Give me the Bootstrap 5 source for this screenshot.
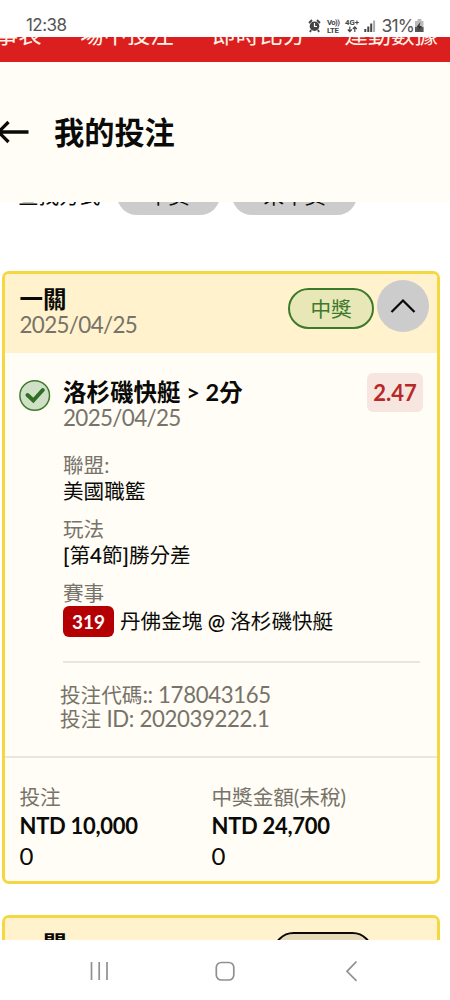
<!DOCTYPE html>
<html lang="zh-Hant">
<head>
<meta charset="utf-8">
<meta name="viewport" content="width=device-width, initial-scale=1">
<title>我的投注</title>
<link href="https://cdn.jsdelivr.net/npm/bootstrap@5.3.0/dist/css/bootstrap.min.css" rel="stylesheet">
<style>
body{font-family:Lato,"Noto Sans CJK TC",sans-serif;background:#fff;color:#0a0a08;height:1000px;overflow:hidden;font-size:20.6px;line-height:26px}
.status{height:37px;padding:14px 25px 0 26px;font-family:Inter,sans-serif;font-size:17px;line-height:23px;color:#555}
.status svg{margin-top:2px}
.status .clock{letter-spacing:-.55px}
.status .pct{letter-spacing:-.9px;font-size:17.5px}
.tabs-strip{height:25px;background:#db1f1f;color:#fff3e8;font-size:23.4px;line-height:34px;gap:38.6px;padding-right:12px}
.tabs-strip span{margin-top:-20px}
.head-bar{height:140px;background:#fffdf5}
.head-bar h1{font-size:30.2px;line-height:40px;font-weight:700;color:#0a0a08}
.filter{height:69px;padding-left:18px}
.filter .lbl{width:99px;margin-top:-19px}
.chip{height:40px;border-radius:20px;background:#ccc;margin-top:-27px;line-height:42px;text-align:center}
.bet{margin:0 10px 0 2px;border:3px solid #f5d742;border-radius:7px;background:#fffdf5;overflow:hidden}
.bet-head{height:79px;background:#fff2cc;padding:0 8px 0 14.5px}
.strong-t{font-size:23.5px;font-weight:700;line-height:26px;white-space:nowrap}
.date{font-size:22.4px;letter-spacing:-.65px;color:#77736a;line-height:26px}
.result{width:86px;height:41px;border:2px solid #3c7a2b;border-radius:21px;background:#e8e7b8;color:#3c7a2b;line-height:39px;text-align:center;margin-top:14px}
.fold{width:52px;height:52px;border-radius:50%;background:#ccc;margin:6px 0 0 3px}
.pick{padding:20px 14px 0 14px;height:405px;border-bottom:2px solid #e9e5e0}
.odds{width:56px;height:39px;border-radius:6px;background:#f7e5e0;color:#b52a27;font-weight:700;font-size:22px;line-height:40px;text-align:center}
.muted{color:#77736a}
.details{margin:20.5px 3px 0 44px;padding-bottom:24px;border-bottom:2px solid #e9e5e0}
.details b{font-weight:600}
.num{width:51px;height:31px;border-radius:6px;background:#b50003;color:#fff;font-weight:700;font-size:19px;line-height:32px;text-align:center;margin-right:6px}
.codes{margin:20px 0 0 41px;font-size:20.6px;line-height:24px}
.codes b{font-weight:400;font-size:22.2px;letter-spacing:-.35px}
.totals{height:123px;padding:26px 0 0 14.5px}
.totals .money{font-size:22px;letter-spacing:-.3px;font-weight:700;line-height:30px;margin-top:1px}
.totals .zero{font-size:24px;line-height:30px}
.totals>div{width:192px}
.second{height:25px;border-bottom:0;border-radius:7px 7px 0 0;margin-top:31px}
.second .result{border-color:#0a0a08;background:#e6dab8;width:100px;margin:14px 56px 0 0}
.sysnav{height:60px;background:#fff}
</style>
</head>
<body class="d-flex flex-column">
<div class="status d-flex flex-shrink-0">
  <span class="clock">12:38</span>
  <div class="ms-auto d-flex">
    <svg width="75" height="20" viewBox="306 16 75 20" fill="#444">
      <circle cx="313.5" cy="26.2" r="4.8"/><path d="M308 23l3-3M319 23l-3-3M310 30l-1 2M317 30l1 2" stroke="#444" stroke-width="1.8"/><path d="M313.5 23v3.5h2.5" stroke="#fff" stroke-width="1.2" fill="none"/>
      <g font-family="Roboto" font-weight="700" font-size="7.8"><text x="326" y="25.2" textLength="13">Vo))</text><text x="326" y="32.6" textLength="12">LTE</text><text x="344" y="25.2" textLength="14">4G+</text></g>
      <path d="M348.8 26.5v5m-2-2l2 2.2 2-2.2M353.8 32v-5m-2 2l2-2.2 2 2.2" stroke="#444" fill="none" stroke-width="1.2"/>
      <path d="M363.3 29h2v3h-2zM366.3 26.5h2v5.5h-2zM369.2 23.5h2v8.5h-2z"/><path d="M372.1 20.5h2v11.5h-2z" fill="#aaa"/>
    </svg>
    <span class="pct">31%</span>
    <svg width="11" height="20" viewBox="414 16 11 20"><path d="M417.5 19h4v2h2v11h-8.500v-11h2.500z" fill="#bbb"/><path d="M415 27h8.500v5H415z" fill="#555"/><path d="M420.500 22l-4 5h2.500l-1 4 4-5h-2.500z" fill="#333"/></svg>
  </div>
</div>
<nav class="tabs-strip d-flex justify-content-end flex-shrink-0 overflow-hidden text-nowrap">
  <span>賽事表</span><span>場中投注</span><span>即時比分</span><span>運動數據</span>
</nav>
<header class="head-bar d-flex align-items-center flex-shrink-0">
  <svg width="54" height="30" viewBox="0 0 54 30" fill="none" stroke="#0a0a08" stroke-width="3.3"><path d="M28.5 15H-1M8.500 5L-1.500 15l10 10"/></svg>
  <h1 class="m-0">我的投注</h1>
</header>
<div class="filter d-flex flex-shrink-0 overflow-hidden">
  <span class="lbl">查找方式</span>
  <span class="chip" style="width:103px">中獎</span>
  <span class="chip" style="width:125px;margin-left:12px">未中獎</span>
</div>
<main class="flex-shrink-0">
  <section class="bet">
    <div class="bet-head d-flex">
      <div class="me-auto" style="padding-top:12px"><div class="strong-t">一關</div><div class="date">2025/04/25</div></div>
      <span class="result">中獎</span>
      <button class="fold border-0 p-0 d-flex" aria-label="收合"><svg width="52" height="52" fill="none" stroke="#0a0a08" stroke-width="2.2"><path d="M14.500 32L26 20.500 37.500 32"/></svg></button>
    </div>
    <div class="pick">
      <div class="d-flex">
        <svg class="flex-shrink-0" width="44" height="44" viewBox="0 0 44 44"><circle cx="15.7" cy="22.500" r="14.800" fill="#cfe0c6" stroke="#3c7a2b" stroke-width="1.500"/><path d="M8.500 22l5.800 5.500 9.500-10.500" fill="none" stroke="#2f6f24" stroke-width="4" stroke-linecap="round"/></svg>
        <div class="me-auto" style="padding-top:6px"><div class="strong-t">洛杉磯快艇 &gt; 2分</div><div class="date">2025/04/25</div></div>
        <span class="odds">2.47</span>
      </div>
      <div class="details">
        <div class="muted">聯盟:</div><div>美國職籃</div>
        <div class="muted mt-2 pt-1">玩法</div><div><b>[</b>第<b>4</b>節<b>]</b>勝分差</div>
        <div class="muted mt-2 pt-1">賽事</div>
        <div class="d-flex align-items-center"><span class="num">319</span><span>丹佛金塊 <b>@</b> 洛杉磯快艇</span></div>
      </div>
      <div class="codes muted"><div>投注代碼<b>:: 178043165</b></div><div>投注 <b>ID: 202039222.1</b></div></div>
    </div>
    <div class="totals d-flex">
      <div><div class="muted">投注</div><div class="money">NTD 10,000</div><div class="zero">0</div></div>
      <div><div class="muted">中獎金額(未稅)</div><div class="money">NTD 24,700</div><div class="zero">0</div></div>
    </div>
  </section>
  <section class="bet second"><div class="bet-head d-flex"><div class="strong-t me-auto" style="padding-top:13px">一關</div><span class="result">未中獎</span></div></section>
</main>
<footer class="sysnav flex-shrink-0">
  <svg width="450" height="60" fill="none" stroke="#909090" stroke-width="1.7"><path d="M91.500 22v18M99.200 22v18M107 22v18M356.500 21.500L347 31.300l9.500 9.500"/><rect x="216.300" y="22.500" width="17.500" height="17.500" rx="5"/></svg>
</footer>
</body>
</html>
